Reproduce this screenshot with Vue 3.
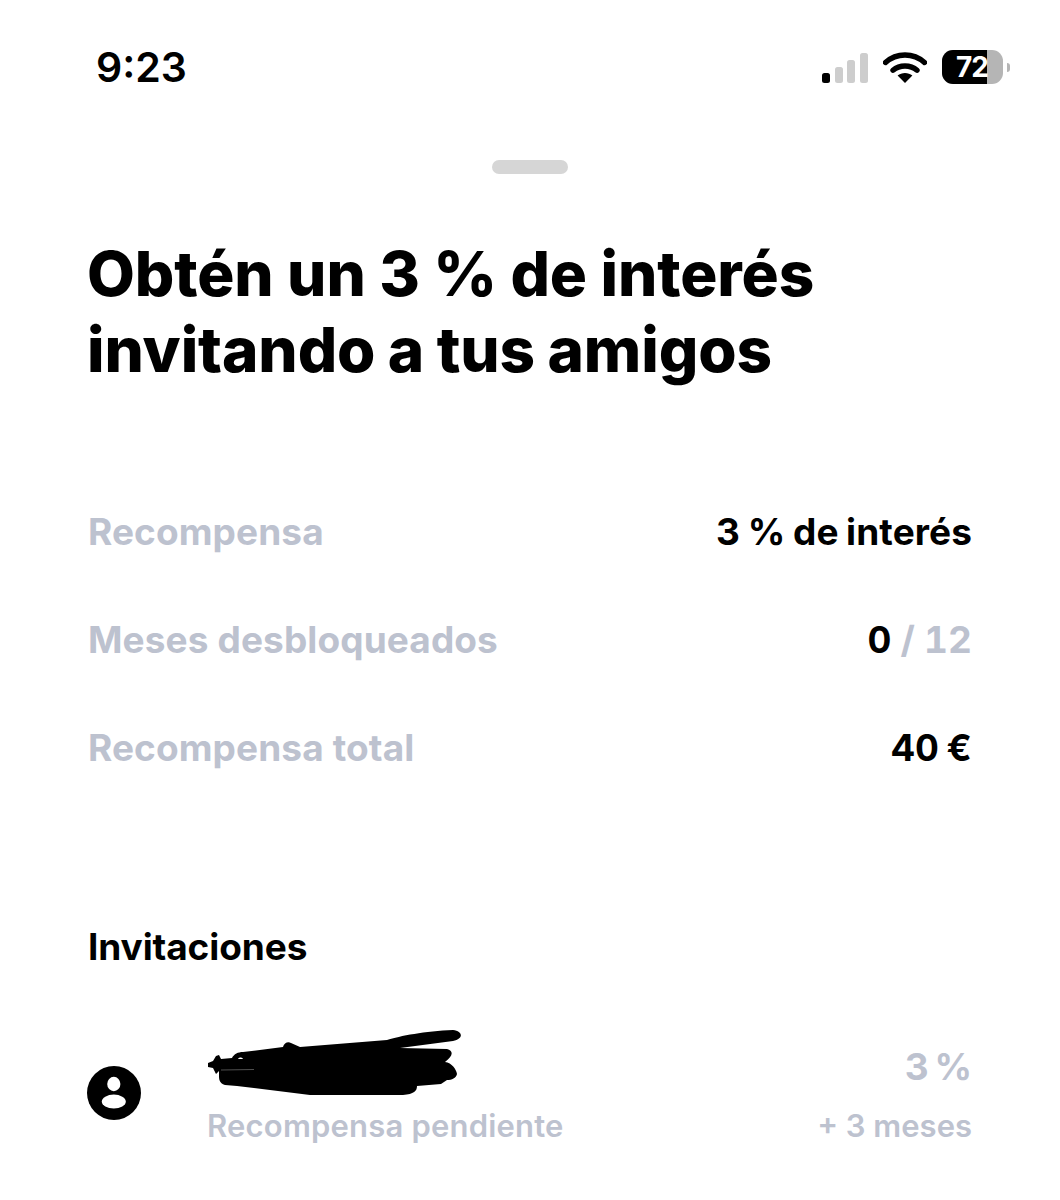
<script setup>
const rows = [
  { label: 'Recompensa', value: '3 % de interés' },
  { label: 'Meses desbloqueados', value: '0', muted: ' / 12' },
  { label: 'Recompensa total', value: '40 €' }
]
</script>

<template>
  <main class="screen">
    <header class="status">
      <span class="time">9:23</span>
      <div class="status-icons">
        <svg class="signal" width="46" height="30" viewBox="0 0 46 30">
          <rect x="0" y="20" width="8" height="10" rx="2.5" fill="#000" />
          <rect x="13" y="14" width="8" height="16" rx="2.5" fill="#cdcdcd" />
          <rect x="25" y="7" width="8" height="23" rx="2.5" fill="#cdcdcd" />
          <rect x="38" y="0" width="8" height="30" rx="2.5" fill="#cdcdcd" />
        </svg>
        <svg class="wifi" width="44" height="32" viewBox="0 0 44 32">
          <path d="M2.5 11.5C13.5 1.5 30.5 1.5 41.5 11.5" fill="none" stroke="#000" stroke-width="5.4" stroke-linecap="round" />
          <path d="M10 19.2C16.5 13.6 27.5 13.6 34 19.2" fill="none" stroke="#000" stroke-width="5.4" stroke-linecap="round" />
          <path d="M22 32L14.6 24.6C18.6 21 25.4 21 29.4 24.6Z" fill="#000" />
        </svg>
        <div class="battery">
          <div class="battery-body">
            <div class="battery-fill"></div>
            <span class="battery-text">72</span>
          </div>
          <span class="battery-nub"></span>
        </div>
      </div>
    </header>

    <div class="handle"></div>

    <h1 class="title">Obtén un 3 % de interés<br /><span class="title-second">invitando a tus amigos</span></h1>

    <section class="summary">
      <div v-for="row in rows" :key="row.label" class="row">
        <span class="label">{{ row.label }}</span>
        <span class="value">{{ row.value }}<span v-if="row.muted" class="value-muted">{{ row.muted }}</span></span>
      </div>
    </section>

    <h2 class="section-title">Invitaciones</h2>

    <div class="invite">
      <svg class="avatar" width="54" height="54" viewBox="0 0 54 54">
        <circle cx="27" cy="27" r="27" fill="#000" />
        <ellipse cx="26.8" cy="18" rx="6.6" ry="7.2" fill="#fff" />
        <ellipse cx="26.8" cy="35.6" rx="12" ry="7" fill="#fff" />
      </svg>
      <div class="invite-main">
        <svg class="scribble" width="256" height="68" viewBox="206 1030 256 68">
          <path d="M208 1064L213 1062L216 1057L219 1056L221 1060L232 1059C234 1055 238 1053 243 1053L283 1048C284 1044 288 1042 291 1044L300 1048L387 1041C400 1037 425 1032 453 1031C463 1032 464 1040 453 1042L400 1049L447 1050C454 1052 453 1057 445 1063C452 1064 456 1070 457 1075C456 1079 452 1081 447 1081L441 1085L417 1087C417 1092 414 1095 403 1096H310L237 1087L225 1086C219 1084 219 1080 219 1076L219 1072L216 1075L213 1069L208 1068Z" fill="#000" />
          <path d="M238 1060C239 1058 242 1058 243 1060Z" fill="#fff" />
          <path d="M221 1071L254 1070.5" fill="none" stroke="#fff" stroke-opacity="0.45" stroke-width="0.7" />
        </svg>
        <span class="invite-status">Recompensa pendiente</span>
      </div>
      <div class="invite-side">
        <span class="invite-rate">3 %</span>
        <span class="invite-months">+ 3 meses</span>
      </div>
    </div>
  </main>
</template>

<style scoped>
.screen {
  width: 1060px;
  height: 1200px;
  box-sizing: border-box;
  padding: 0 88px;
  background: #fff;
  color: #000;
  font-family: Inter, "Liberation Sans", sans-serif;
  overflow: hidden;
}

.status {
  height: 90px;
  padding: 44px 0 0 8px;
  margin-right: -38px;
  box-sizing: border-box;
  display: flex;
  justify-content: space-between;
  align-items: center;
}

.time {
  font-size: 41px;
  font-weight: 600;
  line-height: 46px;
}

.status-icons {
  display: flex;
  align-items: center;
  gap: 15px;
  height: 40px;
}

.signal {
  margin-top: 1px;
}

.battery {
  display: flex;
  align-items: center;
  gap: 4px;
}

.battery-body {
  position: relative;
  width: 61px;
  height: 34px;
  border-radius: 11px;
  overflow: hidden;
  background: #b5b5b5;
}

.battery-fill {
  width: 45px;
  height: 100%;
  background: #000;
}

.battery-text {
  position: absolute;
  left: 14px;
  top: 0;
  color: #fff;
  font-size: 28px;
  font-weight: 700;
  line-height: 34px;
  letter-spacing: -1px;
}

.battery-nub {
  width: 3px;
  height: 9px;
  border-radius: 0 3px 3px 0;
  background: #b5b5b5;
}

.handle {
  width: 76px;
  height: 14px;
  margin: 70px auto 0;
  border-radius: 7px;
  background: #d6d6d6;
}

.title {
  margin: 62px 0 0 -1px;
  font-size: 62px;
  font-weight: 800;
  line-height: 76px;
  letter-spacing: -0.1px;
}

.title-second {
  word-spacing: -1px;
}

.summary {
  margin-top: 122px;
  display: flex;
  flex-direction: column;
  gap: 66px;
}

.row {
  display: flex;
  justify-content: space-between;
  align-items: center;
  height: 42px;
  font-size: 37px;
  font-weight: 700;
  letter-spacing: 0.1px;
  font-variant-numeric: tabular-nums;
}

.label {
  word-spacing: -1px;
}

.value {
  word-spacing: -2.5px;
}

.label,
.value-muted {
  color: #bdc2cf;
}

.value-muted {
  word-spacing: -1px;
}

.section-title {
  margin: 158px 0 0;
  font-size: 37px;
  font-weight: 700;
  line-height: 42px;
  letter-spacing: -0.1px;
}

.invite {
  display: flex;
  align-items: flex-start;
  margin-top: 62px;
}

.avatar {
  flex: none;
  margin: 36px 0 0 -1px;
}

.invite-main {
  margin-left: 66px;
  flex: 1;
  display: flex;
  flex-direction: column;
}

.scribble {
  display: block;
  margin-left: -1px;
  margin-top: -1px;
}

.invite-status,
.invite-months {
  color: #bdc2cf;
  font-size: 31px;
  font-weight: 600;
  line-height: 38px;
}

.invite-status {
  margin-top: 10px;
  letter-spacing: 0.2px;
}

.invite-side {
  display: flex;
  flex-direction: column;
  align-items: flex-end;
  gap: 19px;
  padding-top: 16px;
}

.invite-rate {
  color: #bdc2cf;
  font-size: 37px;
  font-weight: 700;
  line-height: 42px;
  word-spacing: -3px;
}
</style>
